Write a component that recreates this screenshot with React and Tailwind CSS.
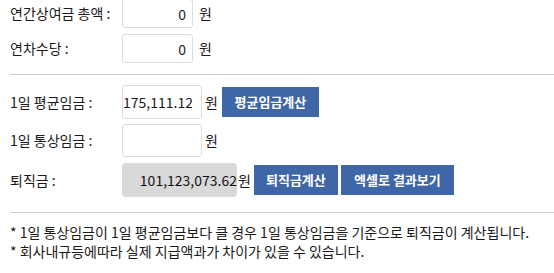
import React from "react";

const font = { fontFamily: '"Noto Sans CJK KR", "Noto Sans", sans-serif' };

function Btn({ children, w }) {
  return (
    <button
      className={`h-[30px] bg-[#3f66a6] text-white text-[13px] font-bold flex items-center justify-center ${w}`}
    >
      {children}
    </button>
  );
}

export default function App() {
  return (
    <div className="w-[554px] h-[273px] bg-white text-[#1a1a1a] text-[14px] overflow-hidden pl-[10px]" style={font}>
      <div className="-mt-px flex flex-col gap-[6px]">
        <div className="flex items-center h-[29px]">
          <div className="w-[112px]">연간상여금 총액 :</div>
          <input
            readOnly
            value="0"
            className="w-[71px] h-[29px] border border-[#dcdcdc] rounded-[3px] text-right pr-[6px] text-[14px] outline-none"
          />
          <span className="ml-[6px]">원</span>
        </div>
        <div className="flex items-center h-[29px]">
          <div className="w-[112px]">연차수당 :</div>
          <input
            readOnly
            value="0"
            className="w-[71px] h-[29px] border border-[#dcdcdc] rounded-[3px] text-right pr-[6px] text-[14px] outline-none"
          />
          <span className="ml-[6px]">원</span>
        </div>
      </div>
      <div className="mt-[11px] h-px bg-[#cccccc]" />
      <div className="mt-[10px] flex flex-col">
        <div className="flex items-center h-[34px]">
          <div className="w-[112px]">1일 평균임금 :</div>
          <input
            readOnly
            value="175,111.12"
            className="w-[80px] h-[34px] border border-[#dcdcdc] rounded-[3px] text-right pr-[9px] pl-0 text-[14px] outline-none"
          />
          <span className="ml-[3px]">원</span>
          <div className="ml-[4px]">
            <Btn w="w-[97px]">평균임금계산</Btn>
          </div>
        </div>
        <div className="flex items-center h-[33px] mt-[5px]">
          <div className="w-[112px]">1일 통상임금 :</div>
          <input
            readOnly
            value=""
            className="w-[80px] h-[33px] border border-[#dcdcdc] rounded-[3px] text-right pr-[9px] text-[14px] outline-none"
          />
          <span className="ml-[3px]">원</span>
        </div>
        <div className="flex items-center h-[34px] mt-[6px]">
          <div className="w-[112px]">퇴직금 :</div>
          <div className="w-[115px] h-[34px] rounded-[4px] bg-[#d9d9d9] flex items-center justify-end text-[14px] text-[#111]">
            101,123,073.62
          </div>
          <span className="ml-[1px]">원</span>
          <div className="ml-[3px] flex gap-[3px]">
            <Btn w="w-[84px]">퇴직금계산</Btn>
            <Btn w="w-[113px]">엑셀로 결과보기</Btn>
          </div>
        </div>
      </div>
      <div className="mt-[15px] h-px bg-[#cccccc]" />
      <div className="mt-[10px] leading-[19px]">
        <p>* 1일 통상임금이 1일 평균임금보다 클 경우 1일 통상임금을 기준으로 퇴직금이 계산됩니다.</p>
        <p>* 회사내규등에따라 실제 지급액과가 차이가 있을 수 있습니다.</p>
      </div>
    </div>
  );
}
